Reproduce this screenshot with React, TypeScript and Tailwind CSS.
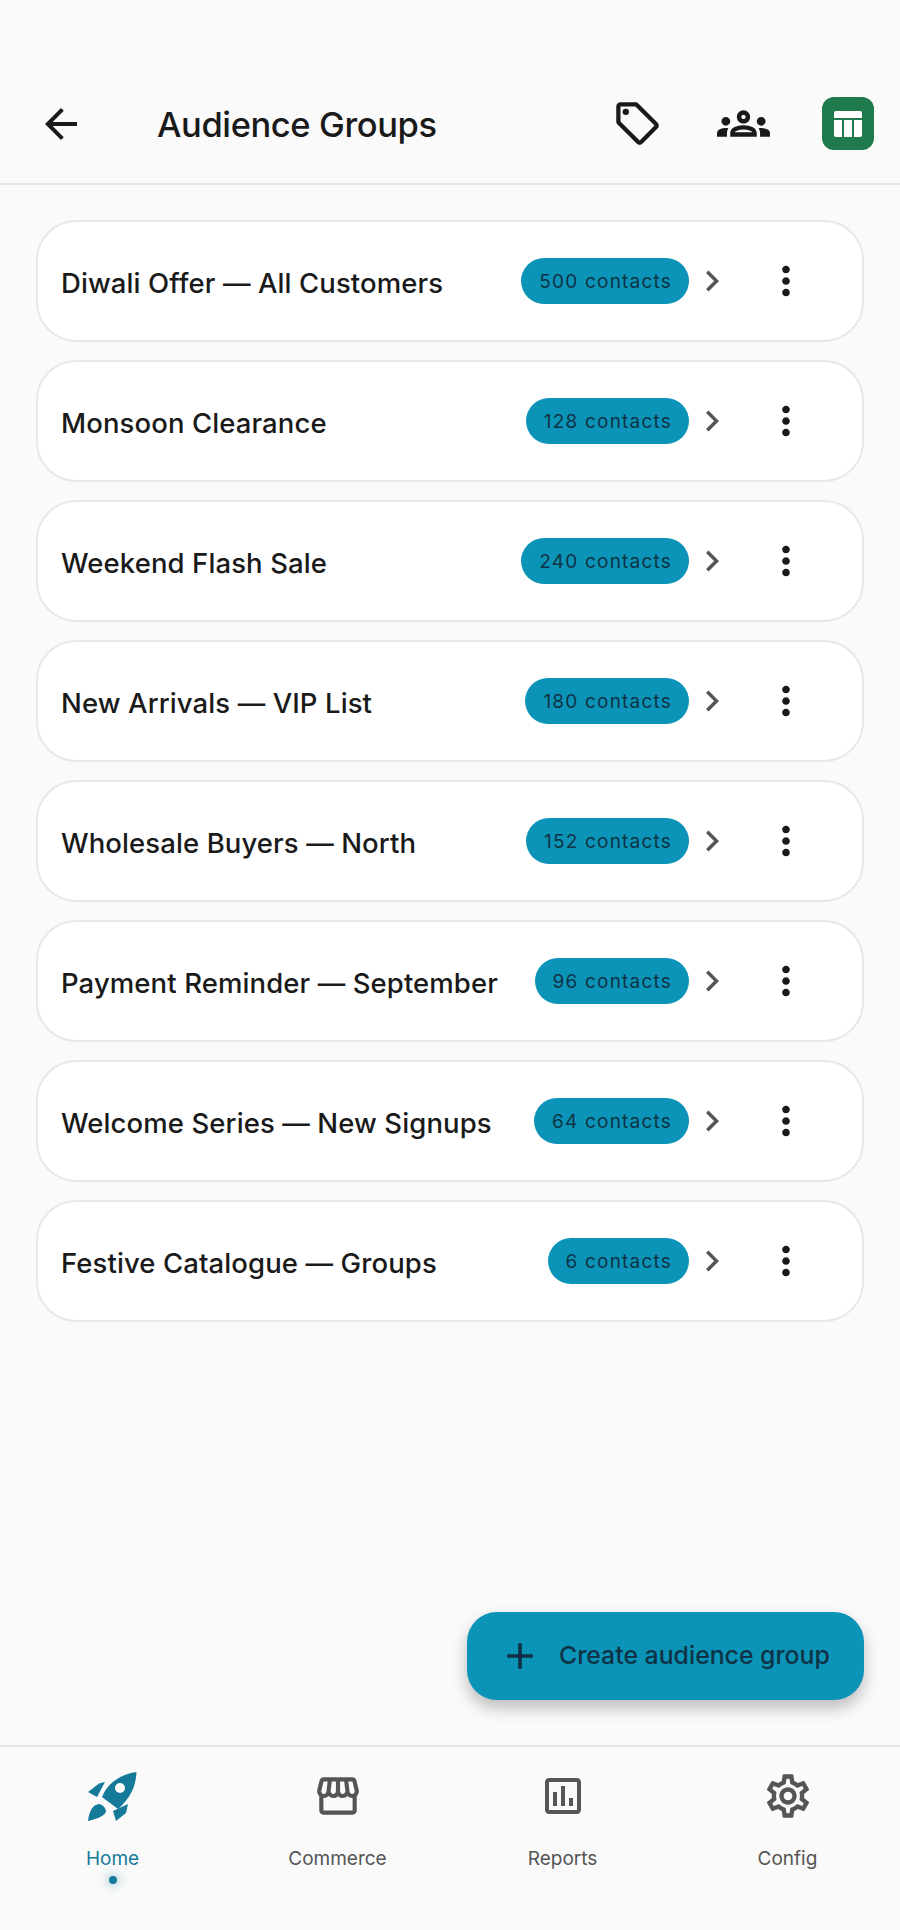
import {MdArrowBack, MdOutlineLocalOffer, MdOutlineGroups, MdChevronRight, MdMoreVert, MdAdd, MdOutlineStorefront, MdOutlineAssessment, MdOutlineSettings} from 'react-icons/md'

const groups = [
    {name: 'Diwali Offer — All Customers', count: '500 contacts'},
    {name: 'Monsoon Clearance', count: '128 contacts'},
    {name: 'Weekend Flash Sale', count: '240 contacts'},
    {name: 'New Arrivals — VIP List', count: '180 contacts'},
    {name: 'Wholesale Buyers — North', count: '152 contacts'},
    {name: 'Payment Reminder — September', count: '96 contacts'},
    {name: 'Welcome Series — New Signups', count: '64 contacts'},
    {name: 'Festive Catalogue — Groups', count: '6 contacts'},
]

function SheetIcon() {
    return (
        <div className="w-[52px] h-[53px] rounded-xl bg-[#1f7a4d] flex items-center justify-center">
            <svg width="28" height="26" viewBox="0 0 28 26" fill="#fff">
                <path d="M2 0h24a2 2 0 0 1 2 2v5H0V2a2 2 0 0 1 2-2z" />
                <path d="M0 9h8v17H2a2 2 0 0 1-2-2z" />
                <rect x="10" y="9" width="8" height="17" />
                <path d="M20 9h8v15a2 2 0 0 1-2 2h-6z" />
            </svg>
        </div>
    )
}

function RocketIcon() {
    return (
        <svg width="49" height="49" viewBox="0 0 49 49" fill="#157a9a">
            <path fillRule="evenodd" d="M48.5 0C48 12 44 25 30 37L14 25C20 10 34 2 48.5 0zM32 11a5 5 0 1 0 0 10 5 5 0 0 0 0-10z" />
            <path d="M0 20L11 11.500L17 10L9 25z" />
            <path d="M40 32L38 41L28 49L25 39z" />
            <path d="M0 49C1 40 4 33 11 32C16 33 18 37 18 40C15 45 8 47 0 49z" />
        </svg>
    )
}

function NavItem({icon, label, active}: {icon: React.ReactNode, label: string, active?: boolean}) {
    return (
        <div className="flex flex-col items-center">
            <div className="h-[50px] flex items-center justify-center">{icon}</div>
            <div className={`mt-[26px] text-[19px] leading-[24px] ${active ? 'text-[#157a9a]' : 'text-[#555555]'}`}>{label}</div>
            {active ? <div className="mt-[5px] w-[8px] h-[8px] rounded-full bg-[#157a9a] shadow-[0_0_8px_4px_rgba(21,122,154,0.2)]"></div> : null}
        </div>
    )
}

export default function App() {
    return (
        <div className="h-[1930px] w-[900px] bg-[#fafafa] flex flex-col font-['Inter',sans-serif] text-[#1a1a1a]">

            {/*header*/}

            <div className="h-[185px] pt-[97px] pl-[37px] pr-[26px] border-b-2 border-[#e6e6e6] flex items-start">
                <div className="h-[53px] flex items-center">
                    <MdArrowBack size={48} />
                </div>
                <div className="ml-[72px] h-[55px] flex items-center text-[34.500px] font-medium tracking-[-0.4px]">Audience Groups</div>
                <div className="ml-auto flex items-center gap-[52px] h-[53px]">
                    <MdOutlineLocalOffer size={51} className="mr-[2px]" />
                    <MdOutlineGroups size={53} />
                    <SheetIcon />
                </div>
            </div>

            {/*list*/}

            <div className="flex-1 flex flex-col gap-[18px] pt-[35px] px-[36px]">
                {groups.map((g) => (
                    <div key={g.name} className="h-[122px] bg-white border-2 border-[#e8e8e8] rounded-[40px] pl-[23px] pr-[53px] flex items-center">
                        <div className="flex-1 text-[27.500px] font-medium tracking-[0.1px] pt-[5px]">{g.name}</div>
                        <div className="h-[46px] pl-[18px] pr-[17px] pt-[2px] rounded-full bg-[#0b93b8] text-[#0f3345] text-[19px] tracking-[1.2px] flex items-center">{g.count}</div>
                        <MdChevronRight size={42} className="ml-[2px] text-[#555555]" />
                        <MdMoreVert size={46} className="ml-[30px] text-[#1a1a1a]" />
                    </div>
                ))}
            </div>

            {/*create button*/}

            <div className="flex justify-end pr-[36px] pb-[45px]">
                <div className="w-[397px] h-[88px] rounded-[30px] bg-[#0b93b8] text-[#0f3345] shadow-[0_8px_16px_rgba(0,0,0,0.25)] flex items-center pl-[31px]">
                    <MdAdd size={44} />
                    <div className="ml-[17px] text-[24.800px] font-medium">Create audience group</div>
                </div>
            </div>

            {/*nav*/}

            <div className="h-[185px] border-t-2 border-[#e6e6e6] grid grid-cols-4 pt-[24px]">
                <NavItem icon={<RocketIcon />} label="Home" active />
                <NavItem icon={<MdOutlineStorefront size={50} color="#555555" />} label="Commerce" />
                <NavItem icon={<MdOutlineAssessment size={48} color="#555555" />} label="Reports" />
                <NavItem icon={<MdOutlineSettings size={52} color="#555555" />} label="Config" />
            </div>
        </div>
    )
}
